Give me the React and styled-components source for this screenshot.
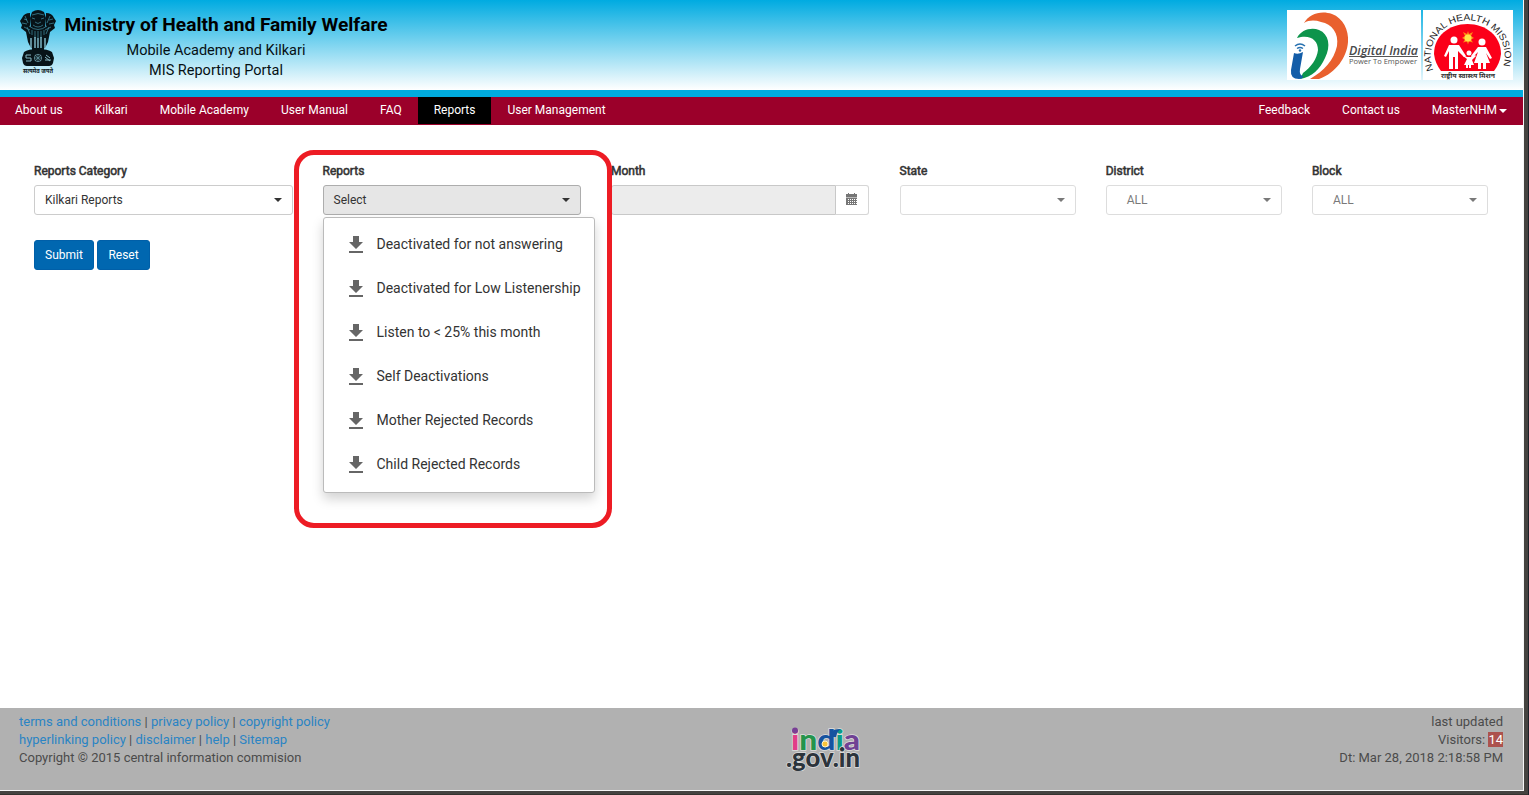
import React from 'react';
import styled, { createGlobalStyle } from 'styled-components';

const Global = createGlobalStyle`
  * { box-sizing: border-box; }
  html, body { margin: 0; padding: 0; overflow: hidden; }
  body { font-family: Roboto, "Noto Sans", sans-serif; font-size: 12px; line-height: 18px; color: #333; background: #43413e; }
  svg { display: block; }
`;

const Frame = styled.div`
  width: 1529px; height: 795px; padding: 0 5px 4px 0;
  background: #454340; border-right: 1px solid #1d2129;
  box-shadow: inset 0 -1px #35332f;
`;
const Page = styled.div`
  width: 1524px; height: 791px; display: flex; flex-direction: column;
  background: #fff; border-right: 1px solid #f6f6f6; border-bottom: 1px solid #f6f6f6;
`;
const Header = styled.header`
  height: 97px; flex: none; display: flex; align-items: flex-start;
  padding: 10px 10px 0 19px; border-bottom: 7px solid #00acdf;
  background: linear-gradient(#00abe1, #fff);
`;
const Titles = styled.div`
  margin-left: 7px; padding-top: 1px; width: 324px; text-align: center; color: #000; white-space: nowrap;
`;
const Title = styled.div`
  font-size: 19.15px; line-height: 28px; font-weight: 700;
`;
const Subtitle = styled.div`
  font-size: 14.5px; line-height: ${p => p.$height}; padding-right: 20px; color: #061014;
`;
const Logos = styled.div`display: flex; gap: 2px; margin-left: auto;`;

const Nav = styled.nav`
  height: 28px; flex: none; display: flex; justify-content: space-between;
  background: #9b002a; color: #fff; padding-bottom: 1px;
`;
const NavGroup = styled.div`display: flex;`;
const NavItem = styled.div`
  padding: 4px 16px 0 ${p => p.$left || '16px'};
  background: ${p => (p.$active ? '#000' : 'transparent')};
  white-space: nowrap; display: flex; line-height: 18px; height: 27px;
`;
const Caret = styled.span`
  width: 0; height: 0; flex: none; align-self: ${p => p.$align || 'center'};
  margin: ${p => p.$margin || '0'};
  border: 4px solid transparent; border-top-color: currentColor; border-bottom: 0;
`;

const Main = styled.main`flex: 1; padding: 36px 35px 0 34px;`;
const Filters = styled.div`display: flex; gap: 30px;`;
const Field = styled.div`
  position: relative; flex: none; width: ${p => (p.$narrow ? '176.2px' : '258.5px')};
`;
const Label = styled.div`
  height: 24px; line-height: 20px; color: #333; -webkit-text-stroke: 0.55px #333;
`;
const Select = styled.div`
  height: 30px; padding: 0 10px ${p => (p.$indent ? '0 20px' : '0 10px')};
  border: 1px solid ${p => (p.$active ? '#adadad' : '#ccc')}; border-radius: 3px;
  display: flex; align-items: center; justify-content: space-between;
  background: ${p => (p.$active ? '#e6e6e6' : '#fff')};
  opacity: ${p => (p.$disabled ? 0.65 : 1)};
`;
const MonthInput = styled.div`display: flex; height: 30px; width: 258px; opacity: .8;`;
const MonthText = styled.div`
  flex: 1; background: #e8e8e8; border: 1px solid #bbb; border-radius: 3px 0 0 3px;
`;
const MonthButton = styled.div`
  width: 33px; border: 1px solid #ccc; border-left: 0; border-radius: 0 3px 3px 0;
  padding: 7px 0 0 10px;
`;
const Menu = styled.div`
  position: absolute; z-index: 2; top: 56px; left: 0; width: 272px; height: 276px;
  padding: 5px 0; background: #fff; border: 1px solid #bbb; border-radius: 3px;
  box-shadow: 0 6px 12px rgba(0,0,0,.175);
`;
const MenuItem = styled.div`
  height: 44px; display: flex; align-items: center; gap: 9px; padding-left: 20px;
  font-size: 14px; line-height: 20px; white-space: nowrap; color: #333;
`;
const MenuText = styled.span`position: relative; top: -1px;`;
const Highlight = styled.div`
  position: absolute; z-index: 3; top: -11px; left: -28.5px; width: 318px; height: 378px;
  border: 5px solid #ed1c24; border-radius: 20px; pointer-events: none;
`;
const Actions = styled.div`display: flex; gap: 3px; margin-top: 25px;`;
const Button = styled.button`
  height: 30px; width: ${p => p.$width}; padding: 0; border: 1px solid #005fa8; border-radius: 3px;
  background: #0067b0; color: #fff; font: 12px/18px Roboto, sans-serif;
`;

const Footer = styled.footer`
  height: 82px; flex: none; display: flex;
  padding: 5px 20px 0 19px; background: #b1b1b1; color: #4b4b4b; font-size: 13px; line-height: 18px;
`;
const FooterBlock = styled.div`
  width: ${p => p.$width || 'auto'}; margin-left: ${p => (p.$width ? '0' : 'auto')};
  text-align: ${p => p.$align || 'left'}; white-space: nowrap;
`;
const Link = styled.a`color: #2a84c4;`;
const Visitors = styled.span`
  display: inline-block; height: 15px; line-height: 15px; background: #ac524e; color: #fff;
`;

const Emblem = () => (
  <svg width="38" height="66" viewBox="0 0 38 66">
    <g fill="#071318">
      <path d="M13 2q6-4 12 0l2 6-1 10-3 5h-8l-3-5-1-10z" />
      <path d="M11 3Q5 3 3 8L1 11l2 4-1 3 5 4 2 10 3 6h4V22l-5-6z" />
      <path d="M27 3q6 0 8 5l2 3-2 4 1 3-5 4-2 10-3 6h-4V22l5-6z" />
      <path d="M12 18h14l-1 22H13zM5 42q4-3 14-3t14 3l2 6-1 5q-1 3-4 3H8q-3 0-4-3l-1-5z" />
    </g>
    <g fill="none" stroke="#4fa7bf" strokeWidth=".6">
      <path d="M13 5q6-3 12 0M13 8l3 1m6 0 3-1M16 12q3 3 6 0M14 15q5 4 10 0M5 9l3 1M3 13l5 1M30 10l4-1M30 14l5-1M10 16q9 7 18 0M13 20v5m3-4v7m3-7v7m3-7v7m3-8v5M8 17l3 7m19-7-3 7M6 6l3 7m22-7-3 7M5 17l6 3m21-3-6 3" />
      <path d="M12 28v10m4-11v11m3-10v10m3-11v11m4-10v10" strokeWidth="1.300" stroke="#8dcddd" />
      <path d="M7 45h5M7 45v3h5v3H7M27 45l4 3m-5-1 5 4m-5-1h6" stroke="#88b9c5" strokeWidth="1" />
      <circle cx="19" cy="48" r="3.700" stroke="#88b9c5" />
      <path d="m16 45 6 6m0-6-6 6m3-7v8m-4-4h8" stroke="#6da4b4" />
    </g>
    <text x="4" y="63" fontSize="6" fontWeight="700" textLength="30" lengthAdjust="spacingAndGlyphs" fill="#101b1f">सत्यमेव जयते</text>
  </svg>
);

const DigitalIndia = () => (
  <svg width="134" height="70" viewBox="0 0 134 70">
    <rect width="134" height="70" fill="#fff" />
    <path d="M17 13C22 4 34 0 45 4 56 8 62 20 61 32 60 47 49 63 32 69H23C37 61 47 50 50 36 52 23 45 14 34 12 28 10 22 10 17 13z" fill="#e9602e" />
    <path d="M10 28C14 20 24 17 32 20 42 24 44 36 38 48 33 59 25 67 13 69l3-6C24 57 30 49 31 40 31 30 23 24 10 28z" fill="#0d944b" />
    <path d="M7 43q4 2 9-1l-3 17q-1 6 3 7 0 3-4 3-9 0-8-9z" fill="#135da8" />
    <g fill="none" stroke="#2670b0" strokeWidth="1.500"><path d="M8 36q5-4 10 0M10 38.500q3-2 6 0" /></g>
    <circle cx="13" cy="40.500" r="1.200" fill="#2670b0" />
    <text x="62" y="45" fontFamily="Open Sans" fontSize="12" fontWeight="600" fontStyle="italic" textLength="69" lengthAdjust="spacingAndGlyphs" fill="#48494b">Digital India</text>
    <path d="M62 46.500h69" stroke="#555" />
    <text x="62" y="54" fontFamily="Open Sans" fontSize="7.500" textLength="68" lengthAdjust="spacingAndGlyphs" fill="#555">Power To Empower</text>
  </svg>
);

const Mission = () => (
  <svg width="90" height="70" viewBox="0 0 90 70">
    <defs><path id="mission-arc" d="M10.500 60A37 36 0 1 1 79 60" /></defs>
    <rect width="90" height="70" fill="#fff" />
    <path d="M18 61A34 34 0 0 1 11 44C11 26 26 14 44.500 14S78 26 78 44a34 34 0 0 1-7 17z" fill="#fb0019" />
    <text fontFamily="Liberation Sans" fontSize="9.300" fill="#222">
      <textPath href="#mission-arc" textLength="138" lengthAdjust="spacingAndGlyphs">NATIONAL HEALTH MISSION</textPath>
    </text>
    <path d="m45 21 1 3 4-2-2 4 3 2-3 1.500 2 3-4-1-1 3-1-3-4 1 2-3-3-1.500 3-2-2-4 4 2z" fill="#ff8c16" />
    <circle cx="45" cy="28" r="3.500" fill="#ffe34a" />
    <g fill="#fff">
      <circle cx="31" cy="30" r="3.500" /><circle cx="59" cy="32" r="3.500" /><circle cx="46" cy="43" r="2.500" />
      <path d="M26 35h10l7 11-2 1-6-6v18h-3V47h-2v12h-4V41l-3 6-2-1z" />
      <path d="M55 37h8l6 11-2 1-4-6 4 10h-4v6h-3v-6h-2v6h-3v-6h-4l4-11-6 6-1-2z" />
      <path d="m40 45 4 2h4l4-2 1 1-4 4 2 5h-3v3h-2v-3h-1v3h-2v-3h-2l3-6-4-3z" />
    </g>
    <text x="18" y="67.500" fontSize="5.600" fontWeight="700" textLength="54" lengthAdjust="spacingAndGlyphs" fill="#333">राष्ट्रीय स्वास्थ्य मिशन</text>
  </svg>
);

const Download = () => (
  <svg width="24" height="24" viewBox="0 0 24 24" fill="#666">
    <path d="M19 9h-4V3H9v6H5l7 7zM5 18v2h14v-2z" />
  </svg>
);

const Calendar = () => (
  <svg width="12" height="13" viewBox="0 0 12 13">
    <path d="M0 1h11v3H0zM0 4.500h11V12H0zM2 0h1v1H2zm6 0h1v1H8z" fill="#555" />
    <path d="M2 6.500h9m-9 2h9m-9 2h9" stroke="#fff" strokeWidth="1" strokeDasharray="1 1" />
  </svg>
);

const IndiaGov = () => (
  <svg width="80" height="58" viewBox="0 0 80 58">
    <g fontFamily="Lato" fontWeight="900" stroke="#dedede" strokeWidth="1.500" paintOrder="stroke">
      <text x="7" y="37" fontSize="28" textLength="69" lengthAdjust="spacingAndGlyphs">
        <tspan fill="#e23c88">i</tspan><tspan fill="#24944c">n</tspan><tspan fill="#1553a0">d</tspan><tspan fill="#0a9c87">i</tspan><tspan fill="#704294">a</tspan>
      </text>
      <text x="2" y="54" fontSize="27" textLength="74" lengthAdjust="spacingAndGlyphs" fill="#2c343c">.gov.in</text>
    </g>
    <circle cx="11" cy="17.500" r="3" fill="#783f95" />
    <path d="M47 20q1-4 10-4-4 2-5 8h-5z" fill="#1553a0" />
    <circle cx="41" cy="31" r="3" fill="#f8c23a" stroke="#fff3ca" />
  </svg>
);

const reports = ['Deactivated for not answering', 'Deactivated for Low Listenership', 'Listen to < 25% this month', 'Self Deactivations', 'Mother Rejected Records', 'Child Rejected Records'];

export default function App() {
  return (
    <Frame>
      <Global />
      <Page>
        <Header>
          <Emblem />
          <Titles>
            <Title>Ministry of Health and Family Welfare</Title>
            <Subtitle $height="23px">Mobile Academy and Kilkari</Subtitle>
            <Subtitle $height="18px">MIS Reporting Portal</Subtitle>
          </Titles>
          <Logos><DigitalIndia /><Mission /></Logos>
        </Header>
        <Nav>
          <NavGroup>
            <NavItem $left="15px">About us</NavItem>
            <NavItem>Kilkari</NavItem>
            <NavItem>Mobile Academy</NavItem>
            <NavItem>User Manual</NavItem>
            <NavItem>FAQ</NavItem>
            <NavItem $active>Reports</NavItem>
            <NavItem>User Management</NavItem>
          </NavGroup>
          <NavGroup>
            <NavItem>Feedback</NavItem>
            <NavItem>Contact us</NavItem>
            <NavItem>MasterNHM<Caret $align="flex-start" $margin="8px 0 0 2px" /></NavItem>
          </NavGroup>
        </Nav>
        <Main>
          <Filters>
            <Field><Label>Reports Category</Label><Select>Kilkari Reports<Caret /></Select></Field>
            <Field>
              <Label>Reports</Label>
              <Select $active>Select<Caret /></Select>
              <Menu>
                {reports.map(r => <MenuItem key={r}><Download /><MenuText>{r}</MenuText></MenuItem>)}
              </Menu>
              <Highlight />
            </Field>
            <Field>
              <Label>Month</Label>
              <MonthInput><MonthText /><MonthButton><Calendar /></MonthButton></MonthInput>
            </Field>
            <Field $narrow><Label>State</Label><Select $disabled><span /><Caret /></Select></Field>
            <Field $narrow><Label>District</Label><Select $disabled $indent>ALL<Caret /></Select></Field>
            <Field $narrow><Label>Block</Label><Select $disabled $indent>ALL<Caret /></Select></Field>
          </Filters>
          <Actions><Button $width="60px">Submit</Button><Button $width="53px">Reset</Button></Actions>
        </Main>
        <Footer>
          <FooterBlock $width="765px">
            <Link>terms and conditions</Link> | <Link>privacy policy</Link> | <Link>copyright policy</Link><br />
            <Link>hyperlinking policy</Link> | <Link>disclaimer</Link> | <Link>help</Link> | <Link>Sitemap</Link><br />
            Copyright © 2015 central information commision
          </FooterBlock>
          <IndiaGov />
          <FooterBlock $align="right">
            last updated<br />Visitors: <Visitors>14</Visitors><br />Dt: Mar 28, 2018 2:18:58 PM
          </FooterBlock>
        </Footer>
      </Page>
    </Frame>
  );
}
